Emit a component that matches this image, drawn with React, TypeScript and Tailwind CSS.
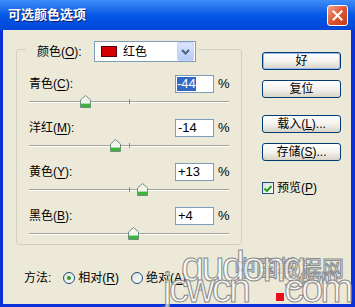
import React from 'react'

const FONT = "font-['Liberation_Sans','Noto_Sans_CJK_SC',sans-serif]"

interface ChannelRow {
  name: string
  key: string
  value: number
}

const rows: ChannelRow[] = [
  { name: '青色', key: 'C', value: -44 },
  { name: '洋红', key: 'M', value: -14 },
  { name: '黄色', key: 'Y', value: 13 },
  { name: '黑色', key: 'B', value: 4 },
]

function fmt(v: number) {
  return v > 0 ? `+${v}` : `${v}`
}

function Label({ text, hot }: { text: string; hot: string }) {
  // 汉字 + (带下划线的快捷键)
  return (
    <span>
      {text}(<span className="underline underline-offset-[2px]">{hot}</span>)
    </span>
  )
}

function Thumb() {
  return (
    <svg width="11" height="13" viewBox="0 0 11 13">
      <path d="M5.5 0.5 L10.5 5 L10.5 12.5 L0.5 12.5 L0.5 5 Z" fill="#f4f3ee" stroke="#6b8f7a" />
      <rect x="1" y="9" width="9" height="3" fill="#3bb43b" />
      <rect x="1" y="8" width="9" height="1" fill="#a8dca8" />
    </svg>
  )
}

function Slider({ value }: { value: number }) {
  return (
    <div className="relative mt-[3px] h-[12px] w-[200px]">
      <div className="absolute left-0 right-0 top-[5px] h-[2px] border-t border-[#a4a3a0] bg-white" />
      <div className="absolute left-[100px] top-[3px] h-[5px] w-px bg-[#8f8e8a]" />
      <div className="absolute top-[-1px]" style={{ left: 100 + value - 5 }}>
        <Thumb />
      </div>
    </div>
  )
}

function XpButton({ children, primary }: { children: React.ReactNode; primary?: boolean }) {
  return (
    <div
      className={`flex h-[18px] w-[79px] items-center justify-center rounded-[3px] border border-[#003c74] bg-gradient-to-b from-white via-[#f4f3ee] to-[#d8d4c8] text-[12px] text-black ${
        primary ? 'shadow-[inset_0_0_0_1px_#9db8f2]' : ''
      }`}
    >
      {children}
    </div>
  )
}

export default function App() {
  return (
    <div className={`relative flex h-[307px] w-[355px] flex-col overflow-hidden bg-[#0831d9] ${FONT}`}>
      {/* 标题栏 */}
      <div className="flex h-[30px] items-center justify-between bg-gradient-to-b from-[#3d8cf7] via-[#0558e6] to-[#0346d8] pl-[8px] pr-[7px]">
        <span className="text-[13px] font-bold text-white [text-shadow:1px_1px_0_#0a1e6e]">可选颜色选项</span>
        <div className="flex h-[21px] w-[21px] items-center justify-center rounded-[3px] border border-white bg-gradient-to-br from-[#f0a08a] via-[#e0562f] to-[#c23a18]">
          <svg width="11" height="11" viewBox="0 0 11 11">
            <path d="M1.5 1.5 L9.5 9.5 M9.5 1.5 L1.5 9.5" stroke="white" strokeWidth="2" strokeLinecap="square" />
          </svg>
        </div>
      </div>

      {/* 主体 */}
      <div className="mb-[3px] ml-[3px] mr-[4px] flex flex-1 flex-col bg-[#ece9d8] pl-[13px] pt-[19px] text-[12px] text-black">
        <div className="flex">
          {/* 分组框 */}
          <div className="relative h-[196px] w-[226px] rounded-[3px] border border-[#d0d0bf]">
            <div className="absolute left-[9px] top-[-9px] flex items-center bg-[#ece9d8] pl-[11px] pr-[2px]">
              <span className="w-[57px]">
                <Label text="颜色" hot="O" />:
              </span>
              <div className="flex h-[21px] w-[102px] items-center border border-[#7f9db9] bg-white">
                <div className="ml-[6px] h-[11px] w-[16px] border border-[#5a0000] bg-[#d40000]" />
                <span className="ml-[6px] flex-1">红色</span>
                <div className="mr-px flex h-[19px] w-[17px] items-center justify-center rounded-[2px] border border-[#c4d5fb] bg-gradient-to-b from-[#dbe6fd] to-[#b6cbf7]">
                  <svg width="9" height="6" viewBox="0 0 9 6">
                    <path d="M1 1 L4.5 4.5 L8 1" fill="none" stroke="#4d6185" strokeWidth="2" />
                  </svg>
                </div>
              </div>
            </div>

            <div className="flex flex-col gap-[11px] pl-[12px] pt-[25px]">
              {rows.map((r, i) => (
                <div key={r.key}>
                  <div className="flex h-[18px] w-[200px] items-center">
                    <span className="flex-1">
                      <Label text={r.name} hot={r.key} />:
                    </span>
                    <div className="flex h-[18px] w-[39px] items-center border border-[#7f9db9] bg-white pl-px text-[13px]">
                      {i === 0 ? (
                        <span className="bg-[#316ac5] leading-[14px] text-white">{fmt(r.value)}</span>
                      ) : (
                        <span className="pl-px">{fmt(r.value)}</span>
                      )}
                    </div>
                    <span className="w-[15px] pl-[4px] text-[13px]">%</span>
                  </div>
                  <Slider value={r.value} />
                </div>
              ))}
            </div>
          </div>

          {/* 按钮 */}
          <div className="ml-[20px] mt-[3px] flex w-[79px] flex-col">
            <XpButton primary>好</XpButton>
            <div className="mt-[10px]">
              <XpButton>复位</XpButton>
            </div>
            <div className="mt-[17px]">
              <XpButton>
                <span>
                  载入(<span className="underline">L</span>)...
                </span>
              </XpButton>
            </div>
            <div className="mt-[10px]">
              <XpButton>
                <span>
                  存储(<span className="underline">S</span>)...
                </span>
              </XpButton>
            </div>
            <div className="mt-[18px] flex items-center gap-[3px]">
              <div className="flex h-[12px] w-[12px] items-center justify-center border border-[#1c5180] bg-gradient-to-br from-[#dcdcd7] to-white">
                <svg width="8" height="7" viewBox="0 0 8 7">
                  <path d="M0.5 3.5 L3 6 L7.5 1" fill="none" stroke="#21a121" strokeWidth="2" />
                </svg>
              </div>
              <Label text="预览" hot="P" />
            </div>
          </div>
        </div>

        {/* 方法 */}
        <div className="ml-[8px] mt-[24px] flex items-center">
          <span>方法:</span>
          <div className="ml-[12px] flex items-center gap-[3px]">
            <div className="flex h-[12px] w-[12px] items-center justify-center rounded-full border border-[#1c5180] bg-gradient-to-br from-[#dcdcd7] to-white">
              <div className="h-[4px] w-[4px] rounded-full bg-[#21a121]" />
            </div>
            <Label text="相对" hot="R" />
          </div>
          <div className="ml-[12px] flex items-center gap-[3px]">
            <div className="h-[12px] w-[12px] rounded-full border border-[#1c5180] bg-gradient-to-br from-[#dcdcd7] to-white" />
            <Label text="绝对" hot="A" />
          </div>
        </div>
      </div>

      {/* 水印 */}
      <div className="pointer-events-none absolute inset-0 font-['Liberation_Sans',sans-serif] text-white/70 [-webkit-text-stroke:1px_#8a8a8a]">
        <span className="absolute left-[234px] top-[255px] font-['Noto_Sans_CJK_SC',sans-serif] text-[22px] leading-none tracking-[0px]">
          中国教程网
        </span>
        <span className="absolute left-[181px] top-[246px] text-[42px] leading-none tracking-[-3px]">qudong</span>
        <span className="absolute left-[300px] top-[266px] text-[20px] leading-none">com</span>
        <span className="absolute left-[163px] top-[268px] text-[40px] leading-none tracking-[-3px]">jcwcn</span>
        <span className="absolute left-[284px] top-[268px] text-[40px] leading-none tracking-[-3px]">com</span>
        <div className="absolute left-[276px] top-[293px] h-[8px] w-[8px] bg-[#e8101a]" />
      </div>
    </div>
  )
}
